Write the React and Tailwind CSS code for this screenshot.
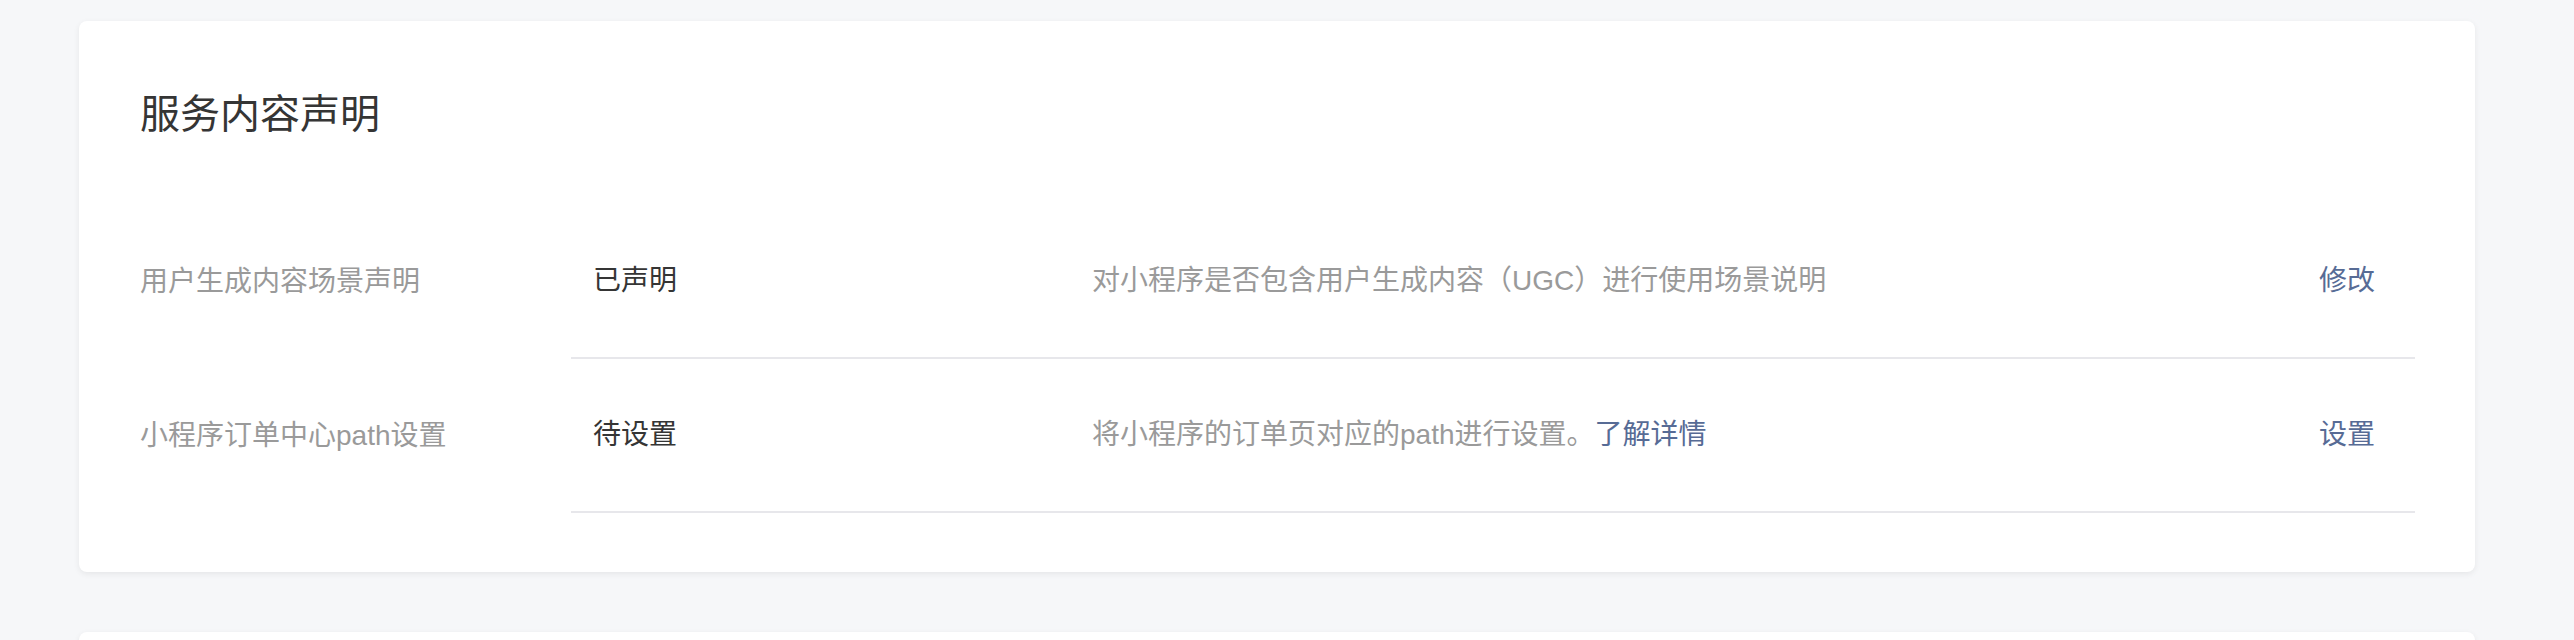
import React from "react";

const ROWS = [
  {
    label: "用户生成内容场景声明",
    value: "已声明",
    desc: "对小程序是否包含用户生成内容（UGC）进行使用场景说明",
    action: "修改",
  },
  {
    label: "小程序订单中心path设置",
    value: "待设置",
    desc: "将小程序的订单页对应的path进行设置。",
    link: "了解详情",
    action: "设置",
  },
];

const App = () => {
  return (
    <div
      className="w-[2574px] h-[640px] overflow-hidden bg-[#f6f7f9] pl-[79px] pt-[21px]"
      style={{ fontFamily: '"Liberation Sans", "Noto Sans CJK SC", sans-serif' }}
    >
      <div className="w-[2396px] bg-white rounded-[8px] shadow-[0_2px_6px_rgba(0,0,0,0.07)] px-[60px] pt-[60px] pb-[59px]">
        <h2 className="text-[40px] leading-[66px] text-[#353535] font-normal pl-[1px]">
          服务内容声明
        </h2>
        <div className="mt-[58px]">
          {ROWS.map((r, i) => (
            <div key={i} className="flex h-[154px]">
              <div className="w-[432px] shrink-0 flex items-center text-[28px] text-[#9a9a9a] pl-[1px]">
                {r.label}
              </div>
              <div className="flex-1 flex items-center border-b-2 border-[#e7e7eb] text-[28px]">
                <div className="w-[521px] shrink-0 pl-[22px] text-[#353535]">
                  {r.value}
                </div>
                <div className="flex-1 text-[#9a9a9a]">
                  {r.desc}
                  {r.link ? <span className="text-[#576b95]">{r.link}</span> : null}
                </div>
                <div className="pr-[40px] text-[#576b95]">{r.action}</div>
              </div>
            </div>
          ))}
        </div>
      </div>
      <div className="w-[2396px] h-[200px] mt-[60px] bg-white rounded-[8px] shadow-[0_2px_6px_rgba(0,0,0,0.07)]"></div>
    </div>
  );
};

export default App;
